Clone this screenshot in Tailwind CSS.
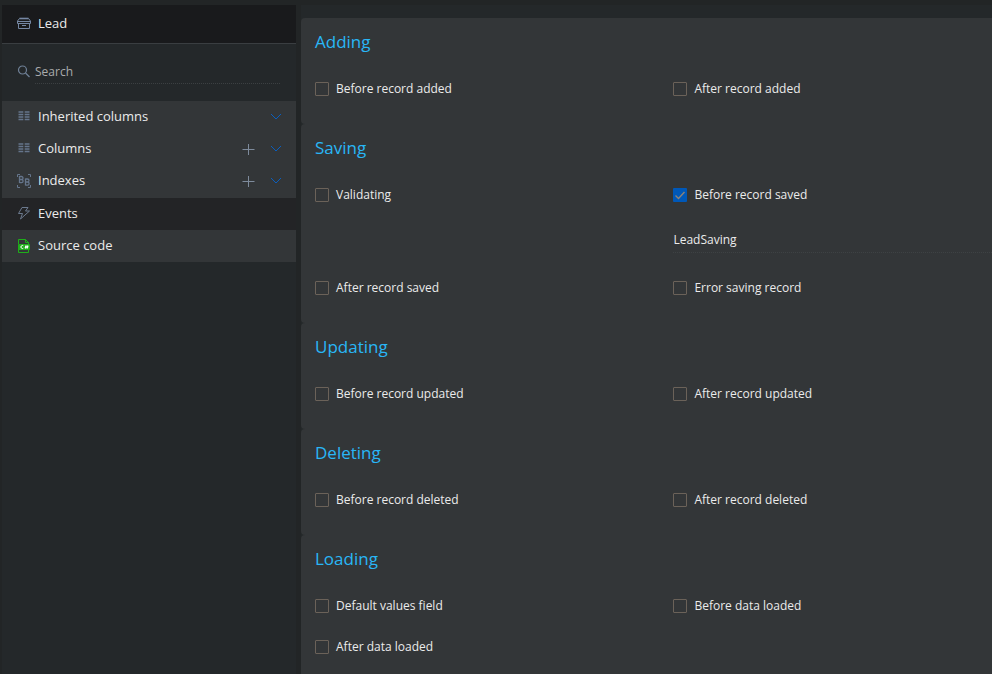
<!DOCTYPE html>
<html lang="en">

<head>
    <meta charset="UTF-8">
    <meta name="viewport" content="width=device-width, initial-scale=1.0">
    <title>Lead - Events</title>
    <script src="https://cdn.jsdelivr.net/npm/@tailwindcss/browser@4"></script>
</head>

<body class="flex min-h-screen gap-[5px] bg-[#222526] pt-[5px] pl-[2px] font-['Open_Sans','Noto_Sans',sans-serif] text-xs text-[#ebebeb]">
    <!-- Sidebar -->
    <aside class="w-[294px] shrink-0 bg-[#24282a] text-[13px]">
        <header class="flex h-[39px] items-center gap-[7px] border-b border-[#3a3e41] bg-[#191a1c] pl-[15px]">
            <svg class="size-[14px]" viewBox="0 0 14 14" fill="none" stroke="#7587a3">
                <path d="M2.5 1.500h9" stroke-width="2" opacity=".6" />
                <path d="M2.500 1.500h9l2 2.500v2.500H.5V4zM.5 4.500h13M1.500 6.500v5h11v-5M5 8.500h4" />
            </svg>
            <h1>Lead</h1>
        </header>

        <div class="flex h-[57px] items-center gap-[5px] pr-4 pb-0.5 pl-[15px]">
            <svg class="size-[13px]" viewBox="0 0 13 13" fill="none" stroke="#6f8096" stroke-width="1.200">
                <circle cx="5.500" cy="5" r="4" />
                <path d="M8.500 8l4 4" />
            </svg>
            <input type="text" placeholder="Search" aria-label="Search"
                class="h-6 min-w-0 flex-1 border-b border-dotted border-[#3c4042] bg-transparent text-xs placeholder-[#a9abac] outline-none">
        </div>

        <nav>
            <div class="bg-[#333638] pb-px">
                <div class="flex h-8 items-center pr-[13px] pl-[15px]">
                    <a href="#" class="flex flex-1 items-center gap-[7px]">
                        <svg class="size-[14px]" viewBox="0 0 14 14" fill="none" stroke="#65758b" stroke-width="1.400">
                            <path d="M1.500 2h4.800M1.500 4.500h4.800M1.500 7h4.800M1.500 9.500h4.800M7.700 2h4.800M7.700 4.500h4.800M7.700 7h4.800M7.700 9.500h4.800" />
                        </svg>
                        Inherited columns
                    </a>
                    <button type="button" aria-label="Expand inherited columns">
                        <svg class="size-[14px]" viewBox="0 0 14 14" fill="none" stroke="#0a5ebd">
                            <path d="M2 4l5 5 5-5" />
                        </svg>
                    </button>
                </div>
                <div class="flex h-8 items-center gap-[14px] pr-[13px] pl-[15px]">
                    <a href="#" class="flex flex-1 items-center gap-[7px]">
                        <svg class="size-[14px]" viewBox="0 0 14 14" fill="none" stroke="#65758b" stroke-width="1.400">
                            <path d="M1.500 2h4.800M1.500 4.500h4.800M1.500 7h4.800M1.500 9.500h4.800M7.700 2h4.800M7.700 4.500h4.800M7.700 7h4.800M7.700 9.500h4.800" />
                        </svg>
                        Columns
                    </a>
                    <button type="button" aria-label="Add column">
                        <svg class="size-[13px]" viewBox="0 0 13 13" fill="none" stroke="#7e8b9c">
                            <path d="M6.500 1v11M.5 6.500h12" />
                        </svg>
                    </button>
                    <button type="button" aria-label="Expand columns">
                        <svg class="size-[14px]" viewBox="0 0 14 14" fill="none" stroke="#0a5ebd">
                            <path d="M2 4l5 5 5-5" />
                        </svg>
                    </button>
                </div>
                <div class="flex h-8 items-center gap-[14px] pr-[13px] pl-[15px]">
                    <a href="#" class="flex flex-1 items-center gap-[7px]">
                        <svg class="size-[14px]" viewBox="0 0 14 14" fill="none" stroke="#65758b">
                            <path d="M.5 3V.5H3M11 .5h2.500V3M.5 11v2.500H3M11 13.500h2.500V11" />
                            <path d="M2.500 2v7M2.500 2.500h2a1.500 1.500 0 010 3h-2M4.500 5.500a1.500 1.500 0 010 3.200h-2M8.500 4.500v7M8.500 5h2a1.500 1.500 0 010 3h-2M10.500 8a1.500 1.500 0 010 3.200h-2" stroke-width="1.300" />
                        </svg>
                        Indexes
                    </a>
                    <button type="button" aria-label="Add index">
                        <svg class="size-[13px]" viewBox="0 0 13 13" fill="none" stroke="#7e8b9c">
                            <path d="M6.500 1v11M.5 6.500h12" />
                        </svg>
                    </button>
                    <button type="button" aria-label="Expand indexes">
                        <svg class="size-[14px]" viewBox="0 0 14 14" fill="none" stroke="#0a5ebd">
                            <path d="M2 4l5 5 5-5" />
                        </svg>
                    </button>
                </div>
            </div>
            <a href="#" aria-current="page" class="flex h-8 items-center gap-[7px] bg-[#232426] pl-[15px]">
                <svg class="size-[14px]" viewBox="0 0 14 14" fill="none" stroke="#6c7a8e">
                    <path d="M5 .5h6L8.500 4h4L3.500 12l2-5.500h-4z" />
                </svg>
                Events
            </a>
            <a href="#" class="flex h-8 items-center gap-[7px] bg-[#333638] pl-[15px]">
                <svg class="size-[14px]" viewBox="0 0 14 14" fill="none" stroke="#1fae1a">
                    <path d="M1.500 5V.5h7l3 3V5M1.500 10v3.500h10V10M8.500 .5v3h3" />
                    <rect x="1" y="5" width="12" height="6" rx="1" fill="#1fae1a" stroke="none" />
                    <path d="M6.300 6.800a1.500 1.500 0 100 2.400M8 7.300h3.500M7.700 8.700h3.500M9 6.500l-.5 3M10.700 6.500l-.5 3" stroke="#fff" />
                </svg>
                Source code
            </a>
        </nav>
    </aside>

    <!-- Event handlers -->
    <main class="flex min-w-0 flex-1 flex-col bg-[#24282a] pt-[13px]">
        <section class="rounded-l bg-[#333638] pt-2 pb-[15px] pl-[14px]">
            <h2 class="mb-[11px] text-[17px] leading-8 text-[#29b6f6]">Adding</h2>
            <div class="grid grid-cols-[9fr_8fr] gap-y-px">
                <label class="flex h-10 items-center gap-[7px]">
                    <input type="checkbox" class="size-[14px] appearance-none rounded-[1px] border border-[#6b6259]">
                    Before record added
                </label>
                <label class="flex h-10 items-center gap-[7px]">
                    <input type="checkbox" class="size-[14px] appearance-none rounded-[1px] border border-[#6b6259]">
                    After record added
                </label>
            </div>
        </section>

        <section class="rounded-l bg-[#333638] pt-2 pb-[15px] pl-[14px]">
            <h2 class="mb-[11px] text-[17px] leading-8 text-[#29b6f6]">Saving</h2>
            <div class="grid grid-cols-[9fr_8fr] gap-y-px">
                <label class="flex h-10 items-center gap-[7px]">
                    <input type="checkbox" class="size-[14px] appearance-none rounded-[1px] border border-[#6b6259]">
                    Validating
                </label>
                <div class="pb-[14px]">
                    <label class="flex h-10 items-center gap-[7px]">
                        <span class="relative flex">
                            <input type="checkbox" checked class="size-[14px] appearance-none rounded-[1px] bg-[#0058b8]">
                            <svg class="pointer-events-none absolute inset-0 size-[14px]" viewBox="0 0 14 14" fill="none" stroke="#8c8378" stroke-width="1.400">
                                <path d="M2.500 7.500l3 3 6-6.500" />
                            </svg>
                        </span>
                        Before record saved
                    </label>
                    <input type="text" value="LeadSaving" aria-label="Before record saved handler"
                        class="mt-3 block h-[26px] w-full border-b border-dotted border-[#3e4244] bg-transparent outline-none">
                </div>
                <label class="flex h-10 items-center gap-[7px]">
                    <input type="checkbox" class="size-[14px] appearance-none rounded-[1px] border border-[#6b6259]">
                    After record saved
                </label>
                <label class="flex h-10 items-center gap-[7px]">
                    <input type="checkbox" class="size-[14px] appearance-none rounded-[1px] border border-[#6b6259]">
                    Error saving record
                </label>
            </div>
        </section>

        <section class="rounded-l bg-[#333638] pt-2 pb-[15px] pl-[14px]">
            <h2 class="mb-[11px] text-[17px] leading-8 text-[#29b6f6]">Updating</h2>
            <div class="grid grid-cols-[9fr_8fr] gap-y-px">
                <label class="flex h-10 items-center gap-[7px]">
                    <input type="checkbox" class="size-[14px] appearance-none rounded-[1px] border border-[#6b6259]">
                    Before record updated
                </label>
                <label class="flex h-10 items-center gap-[7px]">
                    <input type="checkbox" class="size-[14px] appearance-none rounded-[1px] border border-[#6b6259]">
                    After record updated
                </label>
            </div>
        </section>

        <section class="rounded-l bg-[#333638] pt-2 pb-[15px] pl-[14px]">
            <h2 class="mb-[11px] text-[17px] leading-8 text-[#29b6f6]">Deleting</h2>
            <div class="grid grid-cols-[9fr_8fr] gap-y-px">
                <label class="flex h-10 items-center gap-[7px]">
                    <input type="checkbox" class="size-[14px] appearance-none rounded-[1px] border border-[#6b6259]">
                    Before record deleted
                </label>
                <label class="flex h-10 items-center gap-[7px]">
                    <input type="checkbox" class="size-[14px] appearance-none rounded-[1px] border border-[#6b6259]">
                    After record deleted
                </label>
            </div>
        </section>

        <section class="flex-1 rounded-tl bg-[#333638] pt-2 pl-[14px]">
            <h2 class="mb-[11px] text-[17px] leading-8 text-[#29b6f6]">Loading</h2>
            <div class="grid grid-cols-[9fr_8fr] gap-y-px">
                <label class="flex h-10 items-center gap-[7px]">
                    <input type="checkbox" class="size-[14px] appearance-none rounded-[1px] border border-[#6b6259]">
                    Default values field
                </label>
                <label class="flex h-10 items-center gap-[7px]">
                    <input type="checkbox" class="size-[14px] appearance-none rounded-[1px] border border-[#6b6259]">
                    Before data loaded
                </label>
                <label class="flex h-10 items-center gap-[7px]">
                    <input type="checkbox" class="size-[14px] appearance-none rounded-[1px] border border-[#6b6259]">
                    After data loaded
                </label>
            </div>
        </section>
    </main>
</body>

</html>
